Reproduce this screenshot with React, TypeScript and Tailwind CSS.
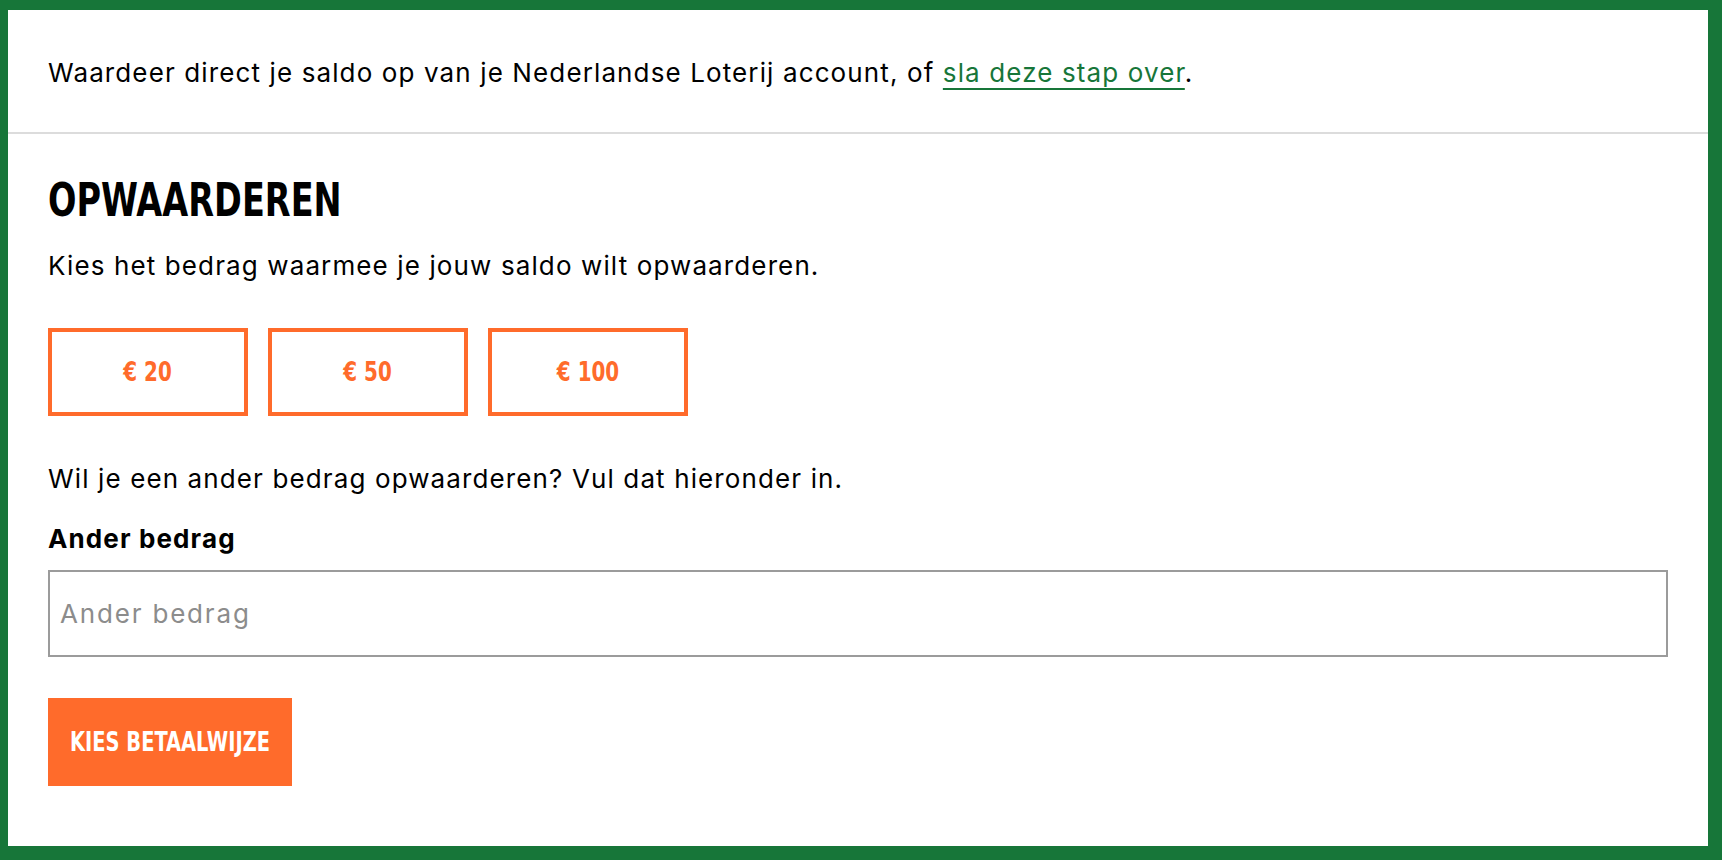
import React, { useState } from 'react';

// Opwaarderen: saldo van je Nederlandse Loterij account ophogen

const AMOUNTS = [20, 50, 100];

const bodyFont = {
  fontFamily: "Inter, 'Noto Sans', 'Liberation Sans', sans-serif",
  letterSpacing: '0.07em',
};
const condensedFont = {
  fontFamily: "'Liberation Sans Narrow', 'DejaVu Sans Condensed', 'Liberation Sans', sans-serif",
  fontStretch: 'condensed' as const,
};

const App: React.FC = () => {
  const [amount, setAmount] = useState('');

  return (
    <div
      className="w-full h-[860px] bg-white border-t-[10px] border-l-[8px] border-r-[14px] border-b-[14px] border-[#177639] flex flex-col text-black"
      style={bodyFont}
    >
      {/* Intro */}
      <div className="h-[124px] px-10 flex items-center border-b-2 border-[#dcdcdc]">
        <p className="text-[26px] leading-8 pt-[3px]">
          Waardeer direct je saldo op van je Nederlandse Loterij account, of{' '}
          <a
            href="#"
            className="text-[#177639] underline decoration-[1.5px] underline-offset-[6px] [text-decoration-skip-ink:none]"
          >
            sla deze stap over
          </a>
          .
        </p>
      </div>

      {/* Opwaarderen */}
      <div className="px-10 pt-[43px] flex flex-col">
        <h1
          className="inline-block self-start origin-left scale-x-[0.81] text-[46px] leading-[46px] font-bold uppercase tracking-normal"
          style={condensedFont}
        >
          Opwaarderen
        </h1>
        <p className="mt-[27px] text-[26px] leading-8">
          Kies het bedrag waarmee je jouw saldo wilt opwaarderen.
        </p>

        <div className="mt-[46px] flex gap-5">
          {AMOUNTS.map((a) => (
            <button
              key={a}
              onClick={() => setAmount(String(a))}
              className="w-[200px] h-[88px] border-4 border-[#ff6b2b] text-[#ff6b2b] flex items-center justify-center"
            >
              <span
                className="inline-block scale-x-[0.82] text-[27px] font-bold tracking-normal"
                style={condensedFont}
              >
                € {a}
              </span>
            </button>
          ))}
        </div>

        <p className="mt-[47px] text-[26px] leading-8">
          Wil je een ander bedrag opwaarderen? Vul dat hieronder in.
        </p>

        <label htmlFor="ander-bedrag" className="mt-[28px] text-[26px] leading-8 font-bold">
          Ander bedrag
        </label>
        <input
          id="ander-bedrag"
          value={amount}
          onChange={(e) => setAmount(e.target.value)}
          placeholder="Ander bedrag"
          className="mt-[15px] w-full h-[87px] border-2 border-[#9b9b9b] px-[10px] text-[26px] text-black placeholder:text-[#8c8c8c] outline-none"
          style={bodyFont}
        />

        <div className="mt-[41px]">
          <button className="w-[244px] h-[88px] bg-[#ff6b2b] text-white flex items-center justify-center">
            <span
              className="inline-block scale-x-[0.8] text-[27px] font-bold uppercase tracking-normal whitespace-nowrap"
              style={condensedFont}
            >
              Kies betaalwijze
            </span>
          </button>
        </div>
      </div>
    </div>
  );
};

export default App;
